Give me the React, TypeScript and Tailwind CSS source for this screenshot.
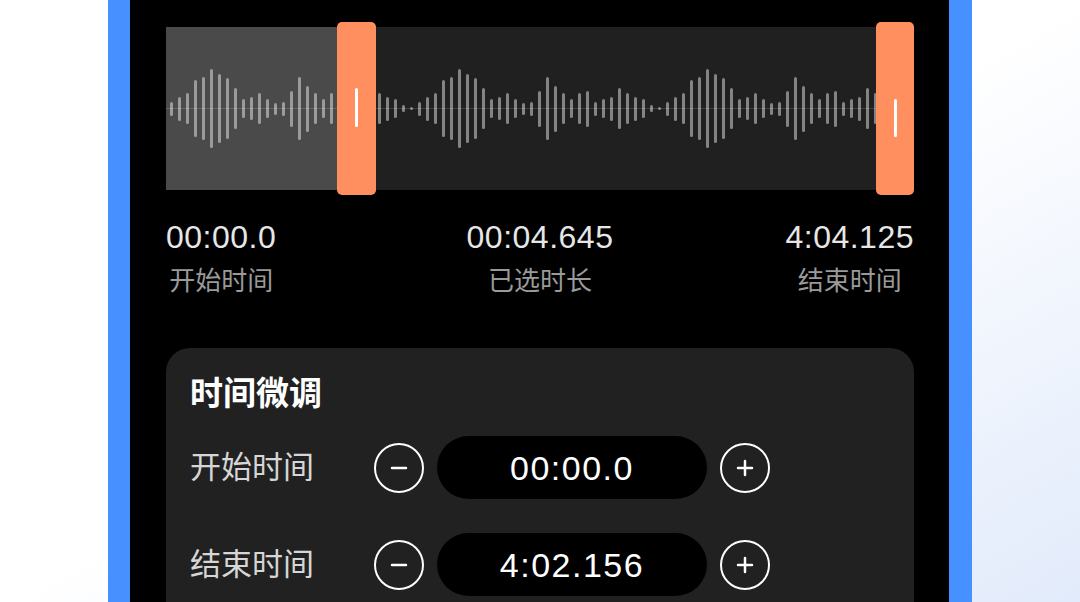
import { Minus, Plus } from "lucide-react";

// 31-bar loop, repeated across the whole track
const PATTERN = [14, 24, 31, 57, 63, 79, 69, 61, 41, 19, 23, 31, 19, 12, 14, 36, 63, 46, 31, 19, 31, 36, 14, 19, 24, 41, 31, 24, 19, 7, 3];
const BARS = Array.from({ length: 89 }, (_, i) => PATTERN[i % PATTERN.length]);

const font = "font-['Liberation_Sans','Noto_Sans_CJK_SC',sans-serif]";

function Waveform() {
  return (
    <div className="relative h-[173px]">
      <div className="absolute inset-x-0 top-[5px] h-[163px] overflow-hidden bg-[#202020]">
        <div className="absolute inset-y-0 left-0 w-[171px] bg-[#4a4a4a]" />
        <div className="absolute inset-x-0 top-[81px] h-px bg-white/15" />
        <div className="relative flex h-full items-center gap-[5px] pl-[4px]">
          {BARS.map((h, i) => (
            <div
              key={i}
              className="w-[3px] shrink-0 rounded-full bg-white/45"
              style={{ height: h }}
            />
          ))}
        </div>
      </div>
      <div className="absolute top-0 left-[171px] flex h-[173px] w-[39px] items-center justify-center rounded-[5px] bg-[#ff8f5e]">
        <div className="mb-[2px] h-[39px] w-[3px] rounded-full bg-white" />
      </div>
      <div className="absolute top-0 right-0 flex h-[173px] w-[38px] items-center justify-center rounded-[5px] bg-[#ff8f5e]">
        <div className="mt-[18px] h-[38px] w-[3px] rounded-full bg-white" />
      </div>
    </div>
  );
}

function TimeStat({ value, label, className }: { value: string; label: string; className?: string }) {
  return (
    <div className={`flex flex-col items-center ${className ?? ""}`}>
      <span className="text-[32px] leading-[40px] tracking-[0.5px] text-[#e6e6e6]">{value}</span>
      <span className="mt-[7px] text-[26px] leading-[34px] text-[#9a9a9a]">{label}</span>
    </div>
  );
}

function RoundButton({ kind }: { kind: "minus" | "plus" }) {
  return (
    <button
      type="button"
      className="flex h-[50px] w-[50px] shrink-0 items-center justify-center rounded-full border-2 border-white text-white"
    >
      {kind === "minus" ? <Minus size={24} strokeWidth={2.5} /> : <Plus size={24} strokeWidth={2.5} />}
    </button>
  );
}

function AdjustRow({ label, value }: { label: string; value: string }) {
  return (
    <div className="flex h-[63px] items-center">
      <span className="w-[184px] text-[31px] leading-[40px] text-[#d6d6d6]">{label}</span>
      <RoundButton kind="minus" />
      <div className="mx-[13px] flex h-[63px] w-[270px] items-center justify-center rounded-full bg-black">
        <span className="text-[34px] leading-[40px] tracking-[1.5px] text-white">{value}</span>
      </div>
      <RoundButton kind="plus" />
    </div>
  );
}

export default function App() {
  return (
    <div className={`${font} h-[602px] w-[1080px] overflow-hidden bg-gradient-to-br from-white via-white to-[#e2ebfb]`}>
      <div className="ml-[108px] h-full w-[864px] bg-[#4690ff] px-[22px]">
        <div className="h-full w-[819px] bg-black pt-[22px] pr-[35px] pl-[36px]">
          <Waveform />

          <div className="mt-[22px] grid grid-cols-[1fr_auto_1fr]">
            <TimeStat value="00:00.0" label="开始时间" className="justify-self-start" />
            <TimeStat value="00:04.645" label="已选时长" />
            <TimeStat value="4:04.125" label="结束时间" className="justify-self-end" />
          </div>

          <div className="mt-[50px] rounded-t-[24px] bg-[#212121] px-[24px] pt-[24px] pb-[30px]">
            <h2 className="text-[33px] leading-[44px] font-semibold text-white">时间微调</h2>
            <div className="mt-[20px] flex flex-col gap-[34px]">
              <AdjustRow label="开始时间" value="00:00.0" />
              <AdjustRow label="结束时间" value="4:02.156" />
            </div>
          </div>
        </div>
      </div>
    </div>
  );
}
